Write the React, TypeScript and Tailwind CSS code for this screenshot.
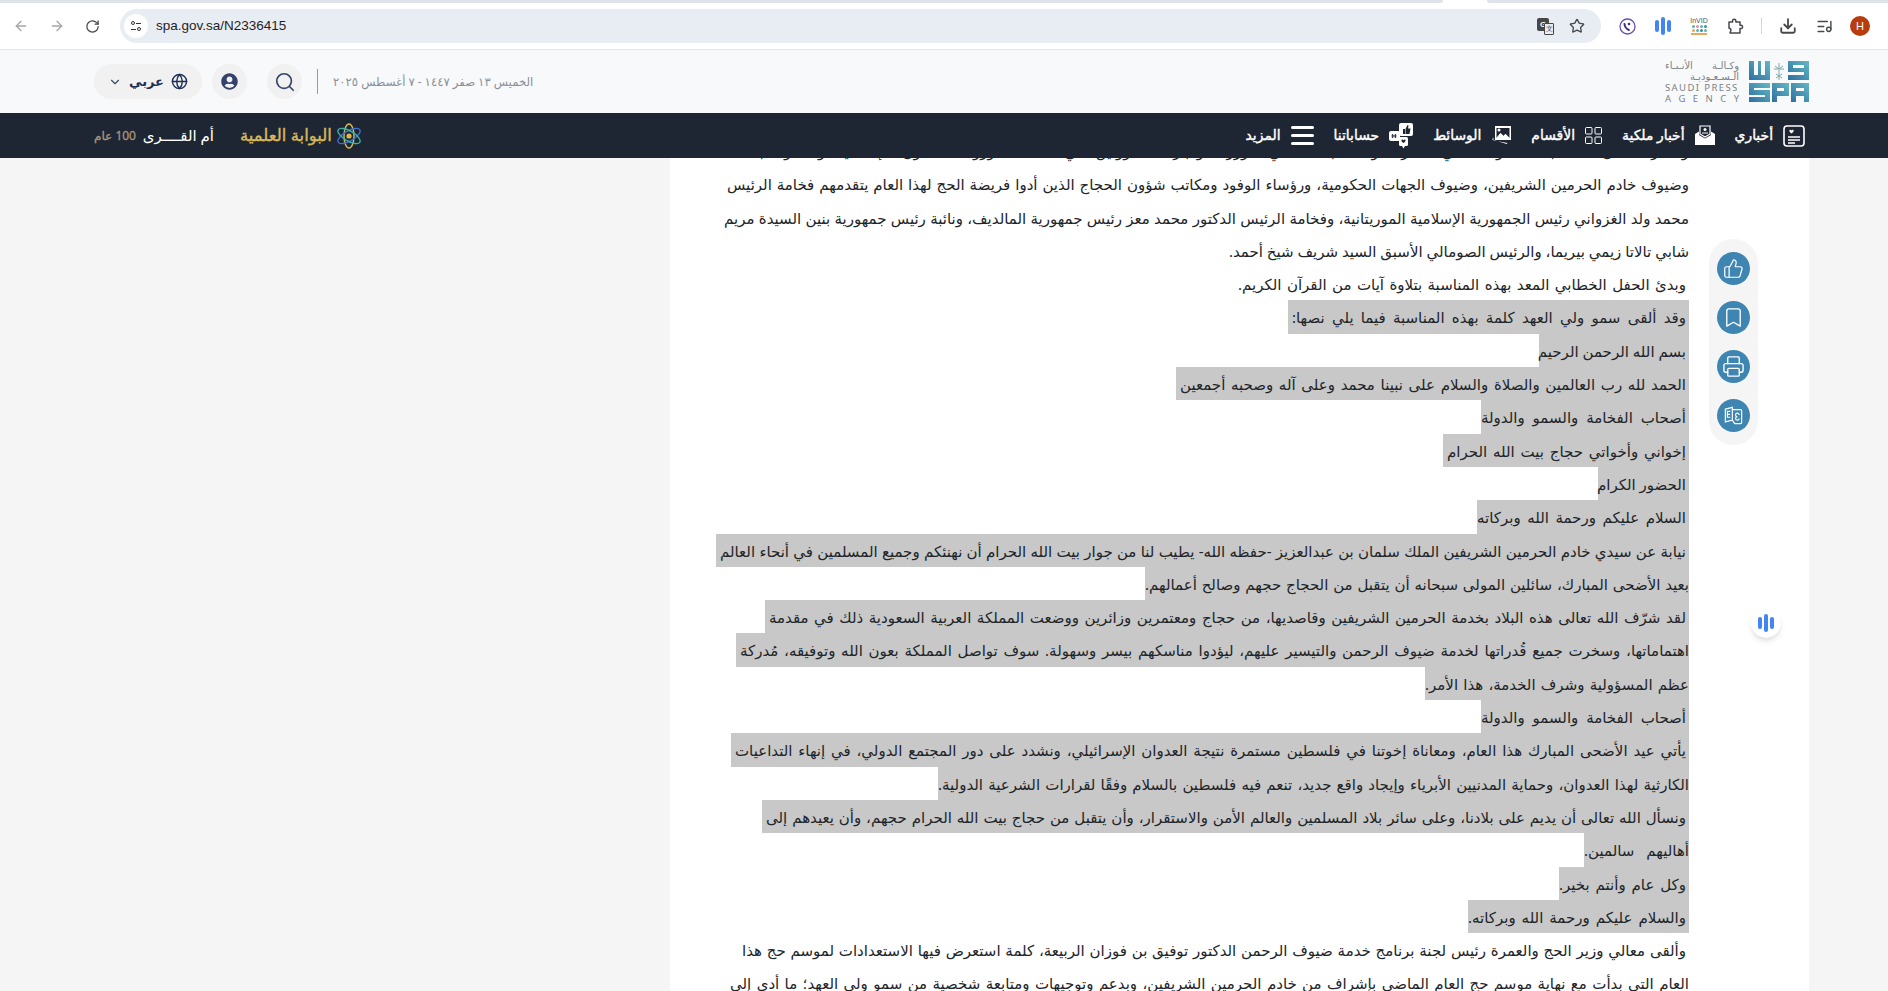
import React from 'react';
import { ArrowLeft, ArrowRight, RotateCw, Star, Download, ListMusic, Search, Globe, ChevronDown, ThumbsUp, Bookmark, Printer } from 'lucide-react';
import { FaUserCircle } from 'react-icons/fa';

// w = width of the line in px, pad = selection runs past the last word
type Line = { text: string; w: number; mark?: boolean; indent?: boolean; pad?: boolean };

const lines: Line[] = [
  { w: 960, text: 'وحضر الحفل أصحاب السمو الملكي الأمراء وأصحاب المعالي الوزراء وكبار المسؤولين في المملكة ورؤساء الدول الإسلامية وممثلو البعثات' },
  { w: 962, text: 'وضيوف خادم الحرمين الشريفين، وضيوف الجهات الحكومية، ورؤساء الوفود ومكاتب شؤون الحجاج الذين أدوا فريضة الحج لهذا العام يتقدمهم فخامة الرئيس' },
  { w: 965, text: 'محمد ولد الغزواني رئيس الجمهورية الإسلامية الموريتانية، وفخامة الرئيس الدكتور محمد معز رئيس جمهورية المالديف، ونائبة رئيس جمهورية بنين السيدة مريم' },
  { w: 460, text: 'شابي تالاتا زيمي بيريما، والرئيس الصومالي الأسبق السيد شريف شيخ أحمد.' },
  { w: 451, indent: true, text: 'وبدئ الحفل الخطابي المعد بهذه المناسبة بتلاوة آيات من القرآن الكريم.' },
  { w: 401, mark: true, indent: true, pad: true, text: 'وقد ألقى سمو ولي العهد كلمة بهذه المناسبة فيما يلي نصها:' },
  { w: 150, mark: true, indent: true, text: 'بسم الله الرحمن الرحيم' },
  { w: 513, mark: true, indent: true, pad: true, text: 'الحمد لله رب العالمين والصلاة والسلام على نبينا محمد وعلى آله وصحبه أجمعين' },
  { w: 208, mark: true, indent: true, text: 'أصحاب الفخامة والسمو والدولة' },
  { w: 246, mark: true, indent: true, pad: true, text: 'إخواني وأخواتي حجاج بيت الله الحرام' },
  { w: 91, mark: true, indent: true, text: 'الحضور الكرام' },
  { w: 212, mark: true, indent: true, text: 'السلام عليكم ورحمة الله وبركاته' },
  { w: 973, mark: true, indent: true, pad: true, text: 'نيابة عن سيدي خادم الحرمين الشريفين الملك سلمان بن عبدالعزيز -حفظه الله- يطيب لنا من جوار بيت الله الحرام أن نهنئكم وجميع المسلمين في أنحاء العالم' },
  { w: 544, mark: true, text: 'بعيد الأضحى المبارك، سائلين المولى سبحانه أن يتقبل من الحجاج حجهم وصالح أعمالهم.' },
  { w: 924, mark: true, indent: true, pad: true, text: 'لقد شرّف الله تعالى هذه البلاد بخدمة الحرمين الشريفين وقاصديها، من حجاج ومعتمرين وزائرين ووضعت المملكة العربية السعودية ذلك في مقدمة' },
  { w: 953, mark: true, pad: true, text: 'اهتماماتها، وسخرت جميع قُدراتها لخدمة ضيوف الرحمن والتيسير عليهم، ليؤدوا مناسكهم بيسر وسهولة. سوف تواصل المملكة بعون الله وتوفيقه، مُدركة' },
  { w: 264, mark: true, text: 'عظم المسؤولية وشرف الخدمة، هذا الأمر.' },
  { w: 208, mark: true, indent: true, text: 'أصحاب الفخامة والسمو والدولة' },
  { w: 958, mark: true, indent: true, pad: true, text: 'يأتي عيد الأضحى المبارك هذا العام، ومعاناة إخوتنا في فلسطين مستمرة نتيجة العدوان الإسرائيلي، ونشدد على دور المجتمع الدولي، في إنهاء التداعيات' },
  { w: 751, mark: true, text: 'الكارثية لهذا العدوان، وحماية المدنيين الأبرياء وإيجاد واقع جديد، تنعم فيه فلسطين بالسلام وفقًا لقرارات الشرعية الدولية.' },
  { w: 927, mark: true, indent: true, pad: true, text: 'ونسأل الله تعالى أن يديم على بلادنا، وعلى سائر بلاد المسلمين والعالم الأمن والاستقرار، وأن يتقبل من حجاج بيت الله الحرام حجهم، وأن يعيدهم إلى' },
  { w: 105, mark: true, text: 'أهاليهم سالمين.' },
  { w: 130, mark: true, indent: true, text: 'وكل عام وأنتم بخير.' },
  { w: 221, mark: true, indent: true, text: 'والسلام عليكم ورحمة الله وبركاته.' },
  { w: 947, indent: true, text: 'وألقى معالي وزير الحج والعمرة رئيس لجنة برنامج خدمة ضيوف الرحمن الدكتور توفيق بن فوزان الربيعة، كلمة استعرض فيها الاستعدادات لموسم حج هذا' },
  { w: 959, text: 'العام التي بدأت مع نهاية موسم حج العام الماضي بإشراف من خادم الحرمين الشريفين، وبدعم وتوجيهات ومتابعة شخصية من سمو ولي العهد؛ ما أدى إلى' },
];

function SpaLogo() {
  return (
    <svg width="60" height="41" viewBox="0 0 60 41">
      <defs>
        <linearGradient id="spa" x1="0" y1="1" x2="1" y2="0">
          <stop offset="0" stopColor="#2f6f9f" />
          <stop offset="1" stopColor="#62b8c4" />
        </linearGradient>
      </defs>
      <g fill="url(#spa)">
        <path d="M0 0h5v14h4V0h3v14h4V0h5v19H0z" />
        <path d="M39 0h21v19H39v-5h16v-3H39zM44 4v3h11V4z" fillRule="evenodd" />
        <path d="M0 22h21v5H5v2h16v12H0v-5h16v-2H0z" />
        <path d="M23 22h17v13H28v6h-5zM28 27v3h7v-3z" fillRule="evenodd" />
        <path d="M42 22h18v19h-5v-6h-8v6h-5zM47 27v3h8v-3z" fillRule="evenodd" />
      </g>
      <g stroke="#7fa9a6" strokeWidth="1" fill="none">
        <path d="M30 9v10M27 17l6-4M33 17l-6-4" />
        <path d="M30 8l-4-3M30 8l4-3M30 8V2M30 8l-5 0M30 8l5 0" />
      </g>
    </svg>
  );
}

function AtomIcon() {
  return (
    <svg width="24" height="26" viewBox="0 0 24 26" fill="none">
      <ellipse cx="12" cy="13" rx="5" ry="12" stroke="#d9b94f" strokeWidth="1.4" />
      <ellipse cx="12" cy="13" rx="5" ry="12.5" stroke="#3f6fd0" strokeWidth="1.4" transform="rotate(60 12 13)" />
      <ellipse cx="12" cy="13" rx="5" ry="12.5" stroke="#35b7a8" strokeWidth="1.4" transform="rotate(-60 12 13)" />
      <circle cx="12" cy="13" r="2.6" fill="#d9b94f" />
    </svg>
  );
}

function NewsIcon() {
  return (
    <svg width="22" height="22" viewBox="0 0 22 22" fill="none">
      <rect x="1" y="1" width="20" height="20" rx="3" stroke="#fff" strokeWidth="1.6" />
      <path d="M6.500 5.200c.9-.9 1.700-.3 2 .3.300-.6 1.100-1.200 2-.3.800.9-.6 2.300-2 3.300-1.400-1-2.800-2.400-2-3.300z" fill="#fff" />
      <path d="M5 12h12M5 15h12M5 18h7" stroke="#fff" strokeWidth="1.300" />
    </svg>
  );
}

function MailIcon() {
  return (
    <svg width="20" height="21" viewBox="0 0 20 21" fill="#fff">
      <path d="M5 1h10v8l-5 3-5-3z" fill="none" stroke="#fff" strokeWidth="1.200" />
      <circle cx="10" cy="4.500" r="1.500" />
      <path d="M7 7.500h6v1H7z" />
      <path d="M0 9l4-2.500V10l6 3.500 6-3.500V6.500L20 9v11H0z" />
    </svg>
  );
}

function MediaIcon() {
  return (
    <svg width="20" height="18" viewBox="0 0 20 18" fill="#fff">
      <path d="M1 13.500l1.500-2v3l14 2.500-.8 1z" />
      <path d="M4 0h16v14H4z" />
      <path d="M5.500 12l4-5 3 3 2-2 4 4v-10H5.500z" fill="#1f2633" />
      <path d="M5.500 12l4-5 3 3 2-2 4 4v1H5.500z" fill="#fff" />
      <circle cx="8" cy="4" r="1.500" fill="#fff" />
    </svg>
  );
}

function SocialIcon() {
  return (
    <svg width="24" height="26" viewBox="0 0 24 26" fill="#fff">
      <rect x="0" y="8" width="11" height="10" rx="2" />
      <rect x="10" y="0" width="14" height="13" rx="2" />
      <rect x="10" y="14" width="9" height="9" rx="1.500" />
      <path d="M13 23h3l-1.500 2.500z" />
      <path d="M3.500 11v4M6.500 11v4M2.500 12.300h5M2.500 13.800h5" stroke="#1f2633" strokeWidth=".8" />
      <path d="M14 6h2v5h-2zM16.500 6l2-4 1 .5-.5 3h2.500l-1 5.500h-4z" fill="#1f2633" />
      <path d="M12.500 17c.8-.8 1.500-.3 2 .3.500-.6 1.200-1.100 2-.3.600 1-1 2.300-2 3-1-.7-2.600-2-2-3z" fill="#1f2633" />
    </svg>
  );
}

function GridIcon() {
  return (
    <svg width="17" height="17" viewBox="0 0 17 17" fill="none" stroke="#fff" strokeWidth="1">
      <rect x=".5" y=".5" width="6.500" height="6.500" rx="1" />
      <rect x="10" y=".5" width="6.500" height="6.500" rx="1" />
      <rect x=".5" y="10" width="6.500" height="6.500" rx="1" />
      <rect x="10" y="10" width="6.500" height="6.500" rx="1" />
    </svg>
  );
}

function TranslateBadge() {
  return (
    <svg width="21" height="21" viewBox="0 0 18 18" fill="none" stroke="#fff" strokeWidth="1">
      <path d="M2 3.500l6-1.500v11l-6 1.500z" />
      <path d="M8 4h7a1 1 0 0 1 1 1v10a1 1 0 0 1-1 1H10l-2-3" />
      <path d="M6.300 5.500H3.800v5h2.500M3.800 8h2.200" />
      <path d="M13.800 8.500a1.500 1.500 0 1 0-1.500 1.500 1.500 1.500 0 1 0 1.500 1.500" />
    </svg>
  );
}

function PhoneExt() {
  return (
    <svg width="17" height="17" viewBox="0 0 17 17" fill="none">
      <circle cx="8.500" cy="8.500" r="7.500" stroke="#6a4fb6" strokeWidth="1.300" />
      <path d="M5.500 6c.3 2.800 1.700 4.800 4.300 6" stroke="#3c2a8c" strokeWidth="2" strokeLinecap="round" />
      <circle cx="10" cy="6" r="1.300" fill="#3c2a8c" />
    </svg>
  );
}

function ExtensionsIcon() {
  return (
    <svg width="17" height="17" viewBox="0 0 17 17" fill="none" stroke="#45484c" strokeWidth="1.500" strokeLinejoin="round">
      <path d="M2 4h3.500V3a1.700 1.700 0 0 1 3.400 0v1H13v3.300h1a1.600 1.600 0 0 1 0 3.200h-1V15H3l.8-2.200c.4-1.300-.4-2.300-1.800-2.800z" />
    </svg>
  );
}

function VoiceBars() {
  return (
    <div className="flex items-center gap-[2px]">
      <span className="w-[4px] h-[12px] rounded-full bg-[#4285f4]" />
      <span className="w-[4px] h-[18px] rounded-full bg-[#4285f4]" />
      <span className="w-[4px] h-[12px] rounded-full bg-[#4285f4]" />
    </div>
  );
}

function BrowserBar() {
  return (
    <div className="shrink-0 bg-white border-b border-[#e6e6e6] font-['Liberation_Sans',sans-serif]">
      <div className="flex h-[3px]">
        <div className="w-[1443px] bg-[#dee3ea] rounded-br-lg" />
        <div className="w-[44px]" />
        <div className="flex-1 bg-[#dee3ea] rounded-bl-lg" />
      </div>
      <div className="flex items-center h-[46px]">
        <div className="flex items-center w-[120px] pl-[13px] gap-[20px]">
          <ArrowLeft size={16} className="text-[#a4a7ab]" />
          <ArrowRight size={16} className="text-[#a4a7ab]" />
          <RotateCw size={15} className="text-[#45484c]" />
        </div>
        <div className="flex items-center w-[1481px] h-[34px] rounded-full bg-[#e8ecf3] pl-[4px]">
          <div className="flex flex-col items-center justify-center w-[24px] h-[24px] rounded-full bg-white gap-[2px]">
            <div className="flex items-center gap-[1px]"><span className="w-[4px] h-[4px] rounded-full border border-[#333]" /><span className="w-[5px] h-[1px] bg-[#333]" /></div>
            <div className="flex items-center gap-[1px]"><span className="w-[5px] h-[1px] bg-[#333]" /><span className="w-[4px] h-[4px] rounded-full border border-[#333]" /></div>
          </div>
          <span className="ml-[8px] text-[13.500px] text-[#1f1f1f]">spa.gov.sa/N2336415</span>
          <div className="ml-auto flex items-center gap-[15px] pr-[16px]">
            <div className="relative w-[17px] h-[17px]">
              <div className="absolute left-0 top-0 w-[12px] h-[13px] rounded-[2px] bg-[#474747] text-white text-[8px] font-bold leading-[13px] text-center">G</div>
              <div className="absolute right-0 bottom-0 w-[10px] h-[12px] rounded-[1px] border border-[#474747] bg-[#e8ecf3] text-[#474747] text-[7px] leading-[10px] text-center">文</div>
            </div>
            <Star size={16} className="text-[#45484c]" />
          </div>
        </div>
        <div className="flex items-center ml-[8px] pr-[9px] flex-1">
          <div className="flex items-center justify-center w-[36px]"><PhoneExt /></div>
          <div className="flex items-center justify-center w-[36px]"><VoiceBars /></div>
          <div className="flex flex-col items-center w-[36px] leading-none">
            <span className="text-[7px] text-[#555]">InVID</span>
            <div className="flex gap-[1px] my-[1px]">
              <span className="w-[3px] h-[3px] rounded-full bg-[#5db4b0]" />
              <span className="w-[3px] h-[3px] rounded-full bg-[#e58fa8]" />
              <span className="w-[3px] h-[3px] rounded-full bg-[#5db4b0]" />
              <span className="w-[3px] h-[3px] rounded-full bg-[#3f8f8c]" />
            </div>
            <div className="flex gap-[1px] mb-[1px]">
              <span className="w-[3px] h-[3px] rounded-full bg-[#e8a860]" />
              <span className="w-[3px] h-[3px] rounded-full bg-[#5db4b0]" />
              <span className="w-[3px] h-[3px] rounded-full bg-[#3f8f8c]" />
              <span className="w-[3px] h-[3px] rounded-full bg-[#5db4b0]" />
            </div>
            <span className="w-[16px] h-[2px] bg-[#e8a860]" />
          </div>
          <div className="flex items-center justify-center w-[36px]"><ExtensionsIcon /></div>
          <div className="flex justify-center w-[17px]"><span className="w-[1px] h-[16px] bg-[#c9d7ee]" /></div>
          <div className="flex items-center justify-center w-[36px]"><Download size={18} strokeWidth={2.400} className="text-[#45484c]" /></div>
          <div className="flex items-center justify-center w-[36px]"><ListMusic size={17} className="text-[#45484c]" /></div>
          <div className="flex items-center justify-center w-[36px]">
            <div className="flex items-center justify-center w-[20px] h-[20px] rounded-full bg-[#b93c0c] text-white text-[11px]">H</div>
          </div>
        </div>
      </div>
    </div>
  );
}

function SiteHeader() {
  return (
    <div className="shrink-0 flex items-center justify-between h-[63px] bg-[#f8f9fb] pl-[94px] pr-[79px]">
      <div className="flex items-center">
        <div className="flex items-center justify-between w-[108px] h-[35px] rounded-full bg-[#f1f1f1] px-[14px] text-[#1f2f56]">
          <ChevronDown size={14} className="text-[#3c4a66]" />
          <div className="flex items-center gap-[7px]">
            <span className="text-[13px] font-bold">عربي</span>
            <Globe size={17} />
          </div>
        </div>
        <div className="flex items-center justify-center w-[35px] h-[35px] ml-[10px] rounded-full bg-[#f1f1f1]">
          <FaUserCircle size={17} className="text-[#33426a]" />
        </div>
        <div className="flex items-center justify-center w-[35px] h-[35px] ml-[20px] rounded-full bg-[#f1f1f1]">
          <Search size={22} className="text-[#33426a]" strokeWidth={1.800} />
        </div>
        <span className="w-[1px] h-[25px] ml-[15px] bg-[#9a9a9a]" />
        <span className="ml-[15px] text-[11.700px] text-[#8a8f99]" dir="rtl">الخميس ١٣ صفر ١٤٤٧ - ٧ أغسطس ٢٠٢٥</span>
      </div>
      <div className="flex items-center gap-[10px]">
        <div className="flex flex-col w-[74px] text-[#7d8286] leading-none">
          <span className="text-[10px] h-[11px] [text-align-last:justify]" dir="rtl">وكـالـة الأنـبـاء</span>
          <span className="text-[10px] h-[11px] [text-align-last:justify]" dir="rtl">الـسـعـوديـة</span>
          <span className="text-[9.500px] tracking-[1.400px] whitespace-nowrap mt-[1px]">SAUDI PRESS</span>
          <span className="text-[9.500px] tracking-[7.500px] whitespace-nowrap mt-[1px]">AGENCY</span>
        </div>
        <SpaLogo />
      </div>
    </div>
  );
}

function NavBar() {
  const items = [
    { label: 'أخباري', icon: <NewsIcon /> },
    { label: 'أخبار ملكية', icon: <MailIcon /> },
    { label: 'الأقسام', icon: <GridIcon /> },
    { label: 'الوسائط', icon: <MediaIcon /> },
    { label: 'حساباتنا', icon: <SocialIcon /> },
    { label: 'المزيد', icon: (
      <div className="flex flex-col gap-[5px] w-[23px]">
        <span className="h-[3px] rounded-full bg-white" />
        <span className="h-[3px] rounded-full bg-white" />
        <span className="h-[3px] rounded-full bg-white" />
      </div>
    ) },
  ];
  return (
    <div className="shrink-0 flex items-center justify-between h-[45px] bg-[#1f2633] pl-[94px] pr-[83px]">
      <div className="flex items-center gap-[26px]">
        <div className="flex items-center justify-between w-[120px]" dir="rtl">
          <span className="text-[15px] text-white whitespace-nowrap">أم القــــرى</span>
          <span className="text-[12px] text-[#a8977a] whitespace-nowrap [-webkit-text-stroke:0.3px_#a8977a]">100 عام</span>
        </div>
        <div className="flex items-center gap-[5px]" dir="rtl">
          <AtomIcon />
          <span className="text-[16.500px] text-[#d9b95a] whitespace-nowrap [-webkit-text-stroke:0.4px_#d9b95a]">البوابة العلمية</span>
        </div>
      </div>
      <div className="flex items-center gap-[20px] text-white" dir="rtl">
        {items.map((item) => (
          <div key={item.label} className="flex items-center gap-[10px]">
            {item.icon}
            <span className="text-[13.900px] font-normal whitespace-nowrap [-webkit-text-stroke:0.4px_white]">{item.label}</span>
          </div>
        ))}
      </div>
    </div>
  );
}

function ActionRail() {
  return (
    <div className="absolute right-[51px] top-[81px] flex flex-col items-center gap-[16px] w-[49px] h-[206px] pt-[13px] rounded-full bg-[#f5f5f5]">
      <div className="flex items-center justify-center w-[33px] h-[33px] rounded-full bg-[#3f85b2] text-white"><ThumbsUp size={21} strokeWidth={1.400} /></div>
      <div className="flex items-center justify-center w-[33px] h-[33px] rounded-full bg-[#3f85b2] text-white"><Bookmark size={23} strokeWidth={1.400} /></div>
      <div className="flex items-center justify-center w-[33px] h-[33px] rounded-full bg-[#3f85b2] text-white"><Printer size={23} strokeWidth={1.400} /></div>
      <div className="flex items-center justify-center w-[33px] h-[33px] rounded-full bg-[#3f85b2]"><TranslateBadge /></div>
    </div>
  );
}

export default function App() {
  return (
    <div className="flex flex-col h-[991px] overflow-hidden bg-white font-['Noto_Sans','DejaVu_Sans',sans-serif]">
      <BrowserBar />
      <SiteHeader />
      <NavBar />
      <div className="flex flex-1 min-h-0">
        <div className="w-[670px] bg-[#f5f5f5]" />
        <div className="relative w-[1139px] overflow-hidden bg-white">
          <div className="-mt-[24px] pr-[120px] text-[15px] leading-[33.300px] text-[#212529]" dir="rtl">
            {lines.map((line, i) => (
              <div key={i} className="h-[33.300px] whitespace-nowrap">
                <span
                  className={`inline-block h-[33.300px] pt-[1px] [text-align-last:justify] ${line.mark ? 'bg-[#c8c8c8]' : ''} ${line.indent ? 'pr-[3px]' : ''} ${line.pad ? 'pl-[4px]' : ''}`}
                  style={{ width: line.w }}
                >
                  {line.text}
                </span>
              </div>
            ))}
          </div>
          <ActionRail />
          <div className="absolute right-[28px] top-[450px] flex items-center justify-center w-[30px] h-[30px] rounded-full bg-white shadow-md">
            <VoiceBars />
          </div>
        </div>
        <div className="flex-1 bg-[#f5f5f5]" />
      </div>
    </div>
  );
}
